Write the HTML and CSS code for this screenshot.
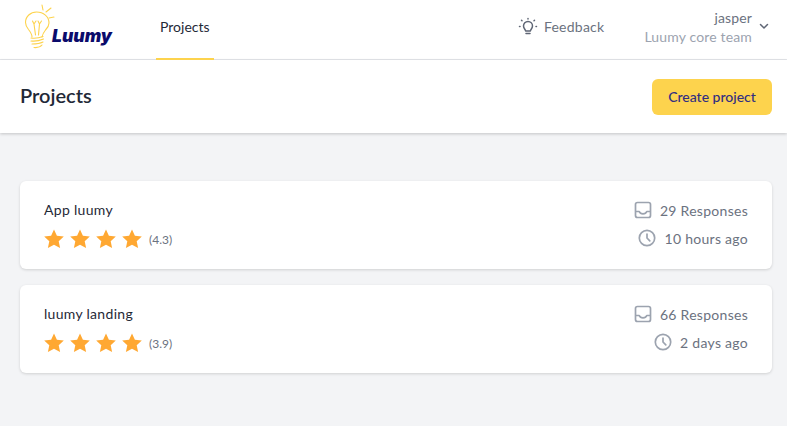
FILE: index.html
```html
<!DOCTYPE html>
<html lang="en">
  <head>
    <meta charset="UTF-8" />
    <meta name="viewport" content="width=device-width, initial-scale=1.0" />
    <title>Luumy - Projects</title>
    <link rel="stylesheet" href="styles.css">
  </head>
  <body>
    <nav class="topbar">
      <div class="logo">
        <svg class="logo-bulb" width="32" height="50" viewBox="0 0 32 50" fill="none" stroke="#fdd34d" stroke-width="1.100" stroke-linecap="round" stroke-linejoin="round">
          <path d="M12 37c0-3-1.500-5-3.500-7.500C7 27.500 5.500 25 5.500 22.500 5.500 16.500 10.500 12 16.500 12c7 0 12.500 4.500 12.500 11 0 3-1.500 5-3.500 7-2 2.500-3 4.500-3.500 7" />
          <path d="M15.500 35l-1.500-11M18.500 35l1-11M14 24l-1.500-3M14 24l2-3M19.500 24l-1.500-3M19.500 24l2-3" />
          <path d="M11 38c4 .5 8 0 12-1.500M11 41c4 .5 9-.5 12.500-2M12 44c4 0 8-.5 11-2M14 47.500c3 .3 6 0 8-2.500" />
          <path d="M22 5l1 5M31 8l-5 4M34 17l-5 1" />
        </svg>
        <span class="logo-text">Luumy</span>
      </div>
      <a class="nav-link" href="#">Projects</a>
      <div class="topbar-right">
        <a class="feedback" href="#">
          <svg width="20" height="20" viewBox="0 0 20 20" fill="none" stroke="#5f6675" stroke-width="1.500" stroke-linecap="round" stroke-linejoin="round">
            <path d="M7.600 14c0-1.400-2.100-2.400-2.100-5a4.500 4.500 0 0 1 9 0c0 2.600-2.100 3.600-2.100 5z" />
            <path d="M8 16.500h4" />
            <path d="M10 1.500v.5M3.500 3.300l.5.5M16.500 3.300l-.5.5M1.500 9.500H2M18.500 9.500H18" />
          </svg>
          <span>Feedback</span>
        </a>
        <div class="account">
          <div class="account-name">jasper</div>
          <div class="account-team">Luumy core team</div>
        </div>
        <svg class="chevron" width="10" height="7" viewBox="0 0 10 7" fill="none" stroke="#5f6675" stroke-width="1.500" stroke-linecap="round" stroke-linejoin="round">
          <path d="M1.500 1.500L5 5l3.500-3.500" />
        </svg>
      </div>
    </nav>

    <header class="page-head">
      <h1>Projects</h1>
      <button class="create-btn">Create project</button>
    </header>

    <main class="project-list">
      <article class="card">
        <div class="card-left">
          <div class="card-title">App luumy</div>
          <div class="rating">
            <svg class="stars" width="98" height="20" viewBox="0 0 98 20" fill="#ffa832"><use href="#star" x="0" /><use href="#star" x="26" /><use href="#star" x="52" /><use href="#star" x="78" /></svg>
            <span class="score">(4.3)</span>
          </div>
        </div>
        <div class="card-right">
          <div class="stat">
            <svg width="18" height="18" viewBox="0 0 18 18" fill="none" stroke="#9ca3af" stroke-width="1.700" stroke-linejoin="round"><use href="#inbox" /></svg>
            <span>29 Responses</span>
          </div>
          <div class="stat">
            <svg width="18" height="18" viewBox="0 0 18 18" fill="none" stroke="#9ca3af" stroke-width="1.700" stroke-linecap="round"><use href="#clock" /></svg>
            <span>10 hours ago</span>
          </div>
        </div>
      </article>

      <article class="card">
        <div class="card-left">
          <div class="card-title">luumy landing</div>
          <div class="rating">
            <svg class="stars" width="98" height="20" viewBox="0 0 98 20" fill="#ffa832"><use href="#star" x="0" /><use href="#star" x="26" /><use href="#star" x="52" /><use href="#star" x="78" /></svg>
            <span class="score">(3.9)</span>
          </div>
        </div>
        <div class="card-right">
          <div class="stat">
            <svg width="18" height="18" viewBox="0 0 18 18" fill="none" stroke="#9ca3af" stroke-width="1.700" stroke-linejoin="round"><use href="#inbox" /></svg>
            <span>66 Responses</span>
          </div>
          <div class="stat">
            <svg width="18" height="18" viewBox="0 0 18 18" fill="none" stroke="#9ca3af" stroke-width="1.700" stroke-linecap="round"><use href="#clock" /></svg>
            <span>2 days ago</span>
          </div>
        </div>
      </article>
    </main>

    <svg class="defs" width="0" height="0">
      <defs>
        <path id="star" d="M10 .5l2.900 6.300 6.900.8-5.100 4.700 1.400 6.800L10 15.700l-6.100 3.400 1.400-6.800L.2 7.600l6.900-.8z" />
        <g id="inbox">
          <rect x="1.500" y="1.500" width="15" height="15" rx="2" />
          <path d="M1.500 10.500h3.700c.6 1.500 2 2.300 3.800 2.300s3.200-.8 3.800-2.300h3.700" />
        </g>
        <g id="clock">
          <circle cx="9" cy="9" r="7.700" />
          <path d="M9 5v4l2.800 2.800" />
        </g>
      </defs>
    </svg>
  </body>
</html>
```

FILE: styles.css
```css
body {
  margin: 0;
  min-height: 426px;
  font-family: "Lato", "Noto Sans", sans-serif;
  background-color: #f3f4f6;
  color: #1f2937;
}
a {
  text-decoration: none;
}
.topbar {
  display: flex;
  align-items: stretch;
  height: 59px;
  padding-left: 20px;
  padding-right: 18px;
  background-color: #fff;
  border-bottom: 1px solid #e5e7eb;
}
.logo {
  display: flex;
  align-items: flex-start;
  width: 136px;
}
.logo-bulb {
  flex: none;
  overflow: visible;
}
.logo-text {
  margin-top: 24px;
  font-family: "Inter", sans-serif;
  font-size: 17.5px;
  line-height: 24px;
  font-weight: 900;
  font-style: italic;
  color: #0b0b6b;
}
.nav-link {
  display: flex;
  align-items: center;
  height: 52px;
  padding: 0 4px 6px;
  margin-bottom: -1px;
  font-size: 14px;
  color: #1f2937;
  border-bottom: 2px solid #fdd34d;
}
.topbar-right {
  display: flex;
  align-items: center;
  margin-left: auto;
  padding-bottom: 6px;
}
.feedback {
  display: flex;
  align-items: center;
  gap: 6px;
  margin-right: 40px;
  font-size: 14px;
  letter-spacing: 0.25px;
  color: #6b7280;
}
.account {
  text-align: right;
  font-size: 14px;
  line-height: 19px;
  letter-spacing: 0.15px;
}
.account-name {
  color: #6b7280;
}
.account-team {
  color: #9ca3af;
}
.chevron {
  margin-left: 7px;
}
.page-head {
  display: flex;
  align-items: center;
  justify-content: space-between;
  height: 73px;
  padding: 0 15px 0 20px;
  background-color: #fff;
  box-shadow: 0 1px 3px rgba(0, 0, 0, 0.2);
}
.page-head h1 {
  margin: 0 0 3px;
  font-size: 20px;
  font-weight: 600;
  color: #1f2937;
}
.create-btn {
  width: 120px;
  height: 36px;
  font-family: inherit;
  font-size: 14px;
  font-weight: 500;
  color: #312e81;
  background-color: #fdd34d;
  border: none;
  border-radius: 6px;
}
.project-list {
  display: flex;
  flex-direction: column;
  gap: 16px;
  padding: 48px 15px 0 20px;
}
.card {
  display: flex;
  justify-content: space-between;
  height: 88px;
  box-sizing: border-box;
  padding: 19px 24px 0;
  background-color: #fff;
  border-radius: 6px;
  box-shadow: 0 1px 3px rgba(0, 0, 0, 0.15);
}
.card-title {
  font-size: 14px;
  line-height: 20px;
  letter-spacing: 0.3px;
  color: #1f2937;
}
.rating {
  display: flex;
  align-items: center;
  gap: 7px;
  margin-top: 9px;
}
.score {
  font-size: 12px;
  color: #6b7280;
}
.card-right {
  display: flex;
  flex-direction: column;
  align-items: flex-end;
  gap: 8px;
}
.stat {
  display: flex;
  align-items: center;
  gap: 8px;
  height: 20px;
  font-size: 14px;
  letter-spacing: 0.28px;
  color: #6b7280;
}
.defs {
  position: absolute;
}
```
